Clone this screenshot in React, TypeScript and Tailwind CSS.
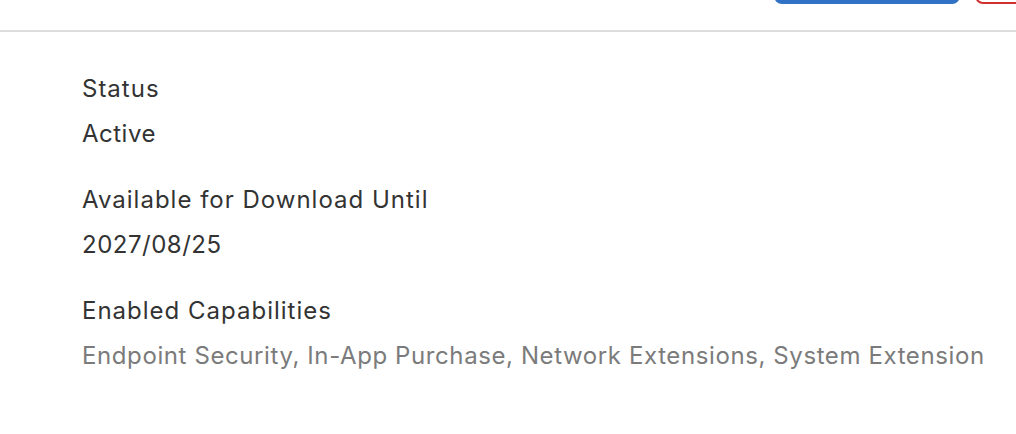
export default function App() {
  const fields = [
    { label: "Status", value: "Active", muted: false },
    { label: "Available for Download Until", value: "2027/08/25", muted: false },
    {
      label: "Enabled Capabilities",
      value: "Endpoint Security, In-App Purchase, Network Extensions, System Extension",
      muted: true,
    },
  ];

  return (
    <div className="w-[1016px] h-[434px] bg-white overflow-hidden font-['Inter',sans-serif]">
      {/* header with buttons cut off at top */}
      <div className="h-[32px] border-b-2 border-[#dcdcdc] overflow-hidden flex justify-end items-start gap-[15px] -mr-[60px]">
        <button className="-mt-[36px] h-[40px] w-[186px] rounded-[8px] bg-[#3172c6]"></button>
        <button className="-mt-[36px] h-[40px] w-[101px] rounded-[8px] border-2 border-[#d22f2f] bg-white"></button>
      </div>

      <div className="pl-[82px] pt-[41px] flex flex-col gap-[34px]">
        {fields.map((f) => (
          <div key={f.label} className="flex flex-col gap-[13px]">
            <div className="text-[24px] leading-[32px] tracking-[1px] text-[#333333]">{f.label}</div>
            <div
              className={`text-[24px] leading-[32px] ${
                f.muted ? "text-[#7b7b7b] tracking-[0.6px]" : "text-[#333333] tracking-[0.5px]"
              }`}
            >
              {f.value}
            </div>
          </div>
        ))}
      </div>
    </div>
  );
}
